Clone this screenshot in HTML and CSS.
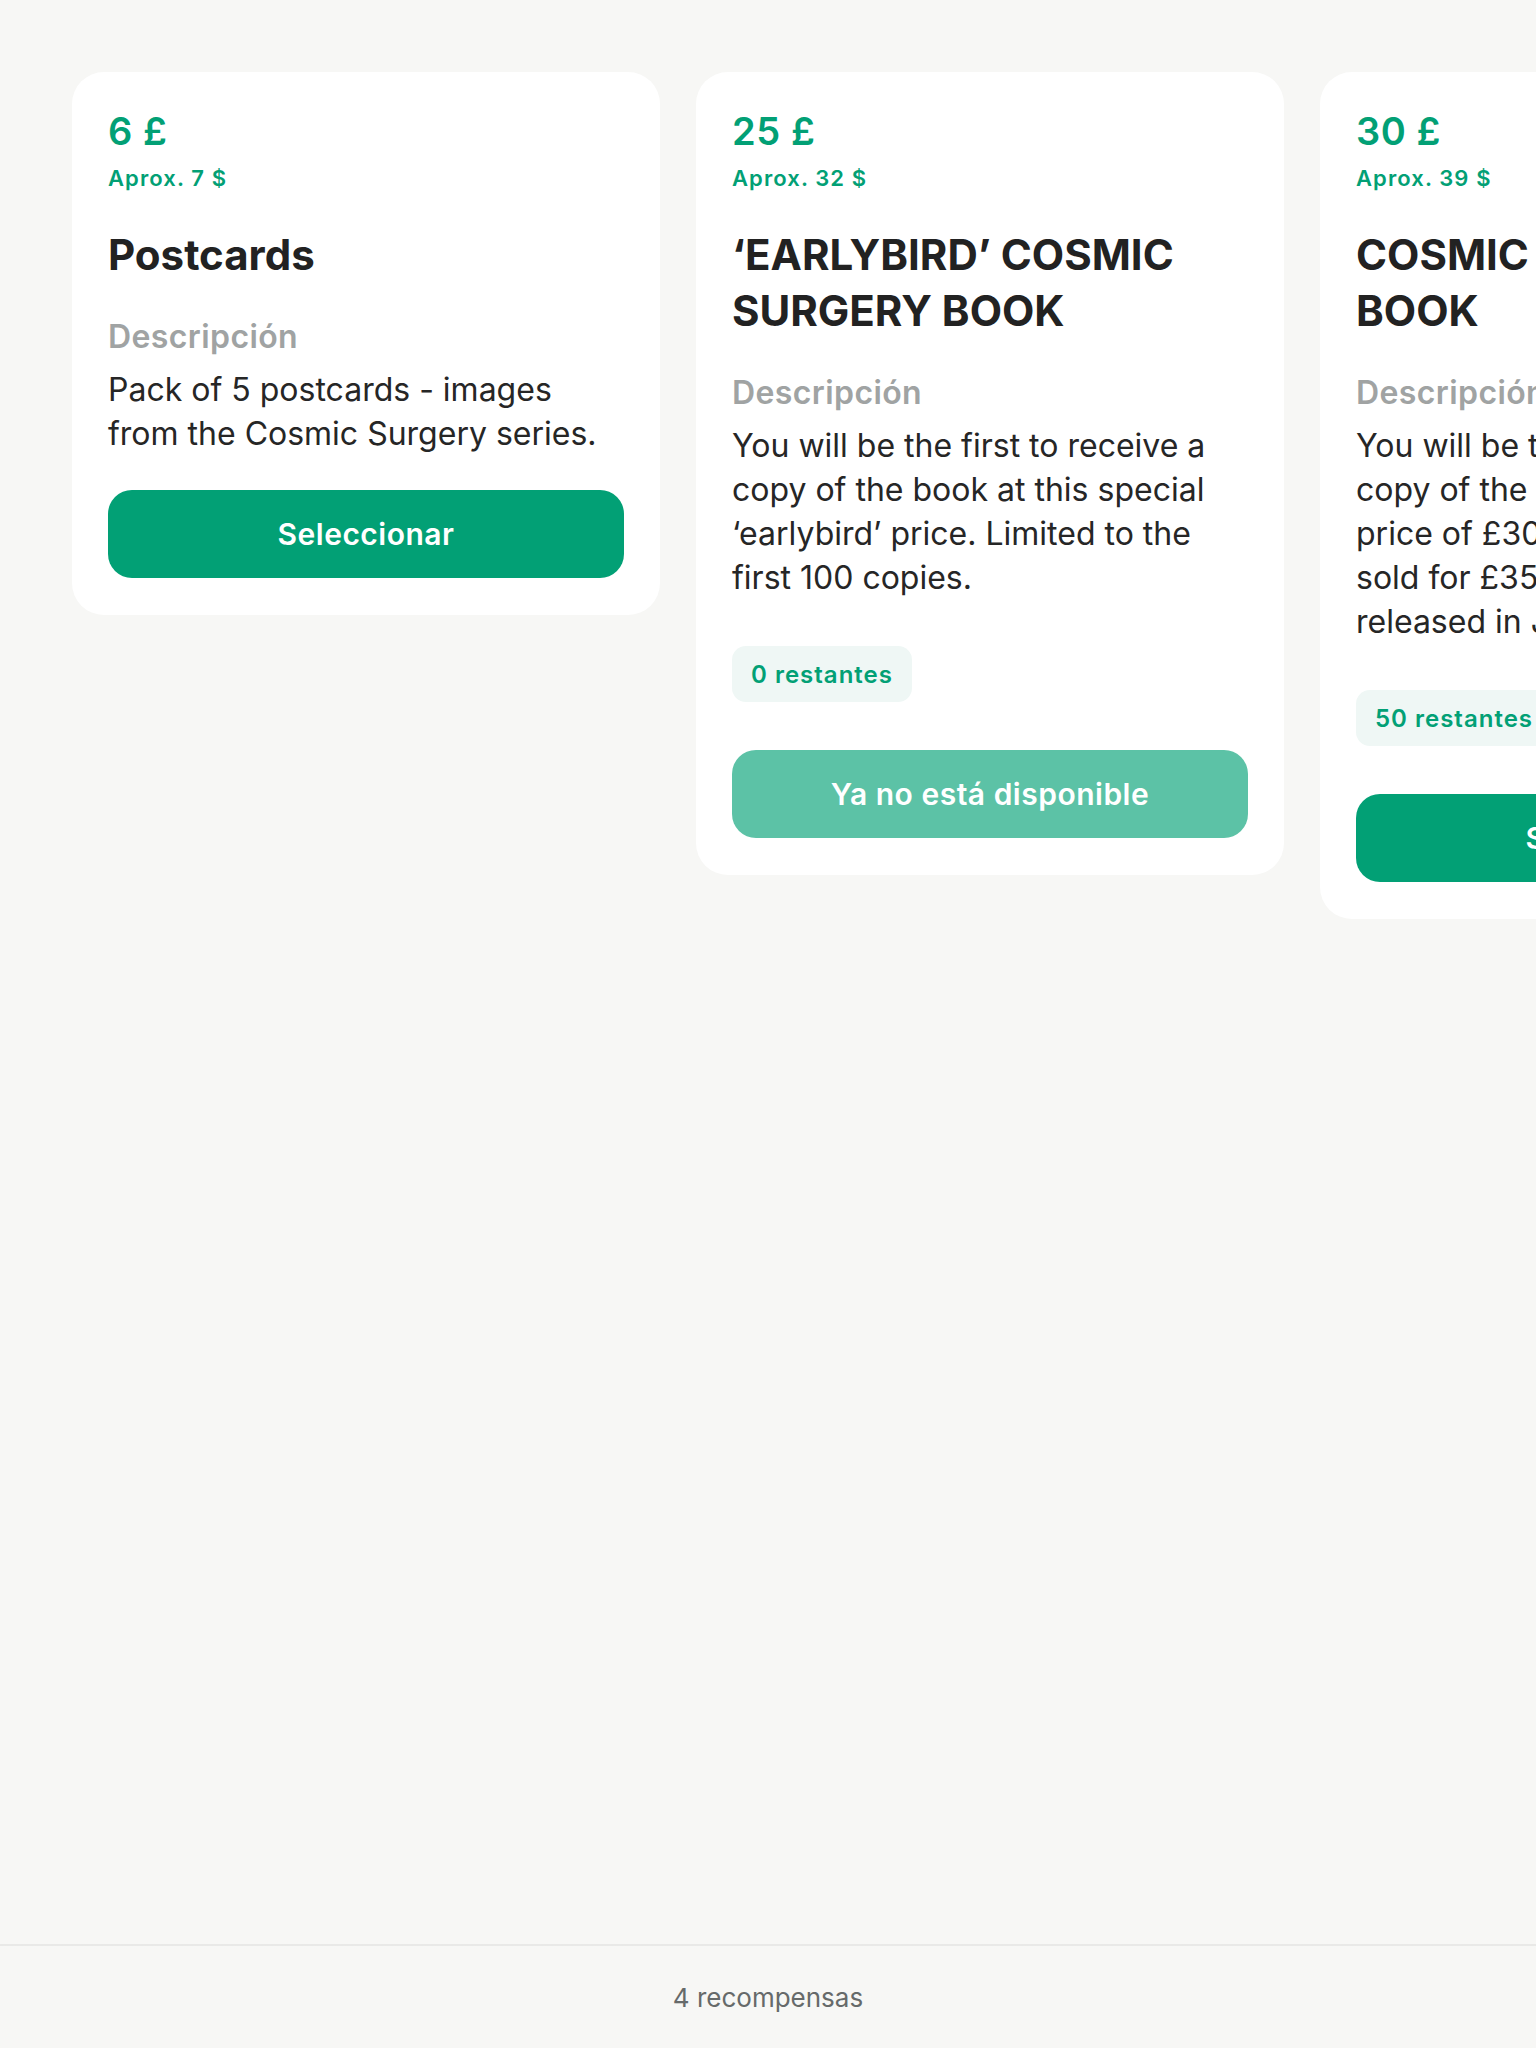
FILE: index.html
```html
<!DOCTYPE html>
<html lang="es">
<head>
<meta charset="utf-8">
<title>Recompensas</title>
<link rel="stylesheet" href="styles.css">
</head>
<body>
<div class="page">
  <div class="rewards">
    <div class="card">
      <div class="price">6 £</div>
      <div class="approx">Aprox. 7 $</div>
      <h2 class="title">Postcards</h2>
      <div class="desc-label">Descripción</div>
      <p class="desc">Pack of 5 postcards - images from the Cosmic Surgery series.</p>
      <button class="btn">Seleccionar</button>
    </div>
    <div class="card">
      <div class="price">25 £</div>
      <div class="approx">Aprox. 32 $</div>
      <h2 class="title">‘EARLYBIRD’ COSMIC SURGERY BOOK</h2>
      <div class="desc-label">Descripción</div>
      <p class="desc">You will be the first to receive a copy of the book at this special ‘earlybird’ price. Limited to the first 100 copies.</p>
      <div class="badge">0 restantes</div>
      <button class="btn btn-disabled">Ya no está disponible</button>
    </div>
    <div class="card">
      <div class="price">30 £</div>
      <div class="approx">Aprox. 39 $</div>
      <h2 class="title">COSMIC SURGERY<br>BOOK</h2>
      <div class="desc-label">Descripción</div>
      <p class="desc">You will be the first to receive a<br>copy of the book at the special<br>price of £30. The book will be<br>sold for £35 when it is<br>released in June.</p>
      <div class="badge">50 restantes</div>
      <button class="btn">Seleccionar</button>
    </div>
    <div class="card">
      <div class="price">100 £</div>
      <div class="approx">Aprox. 127 $</div>
      <h2 class="title">SIGNED PRINT</h2>
      <div class="desc-label">Descripción</div>
      <p class="desc">A signed limited edition print from the Cosmic Surgery series.</p>
      <button class="btn">Seleccionar</button>
    </div>
  </div>
  <div class="footer">4 recompensas</div>
</div>
</body>
</html>
```

FILE: styles.css
```css
html, body {
  margin: 0;
  padding: 0;
  background: #f7f7f5;
  font-family: Inter, "Noto Sans", sans-serif;
}
.page {
  height: 100vh;
  display: flex;
  flex-direction: column;
  overflow: hidden;
}
.rewards {
  flex: 1;
  display: flex;
  align-items: flex-start;
  gap: 36px;
  padding: 72px 0 0 72px;
  overflow: hidden;
}
.card {
  flex: 0 0 588px;
  box-sizing: border-box;
  background: #ffffff;
  border-radius: 32px;
  padding: 38px 36px 37px;
  display: flex;
  flex-direction: column;
  align-items: flex-start;
}
.price {
  font-size: 38px;
  line-height: 43px;
  font-weight: 600;
  letter-spacing: 0.6px;
  color: #02a075;
}
.approx {
  margin-top: 12px;
  font-size: 22px;
  line-height: 26px;
  font-weight: 600;
  letter-spacing: 1.1px;
  color: #02a075;
}
.title {
  margin: 36px 0 0;
  font-size: 42px;
  line-height: 56px;
  font-weight: 700;
  color: #222222;
}
.desc-label {
  margin-top: 32px;
  font-size: 32px;
  line-height: 44px;
  font-weight: 600;
  letter-spacing: 0.4px;
  color: #a0a3a3;
}
.desc {
  margin: 9px 0 0;
  font-size: 32px;
  line-height: 44px;
  font-weight: 400;
  color: #262626;
}
.badge {
  margin-top: 46px;
  height: 56px;
  box-sizing: border-box;
  padding: 0 19px;
  display: flex;
  align-items: center;
  border-radius: 14px;
  background: #eff7f5;
  color: #02a075;
  font-size: 24px;
  font-weight: 600;
  letter-spacing: 1px;
}
.btn {
  align-self: stretch;
  margin-top: 34px;
  height: 88px;
  border: none;
  border-radius: 24px;
  background: #02a075;
  color: #ffffff;
  font-family: Inter, "Noto Sans", sans-serif;
  font-size: 30px;
  font-weight: 600;
  letter-spacing: 0.5px;
}
.badge + .btn {
  margin-top: 48px;
}
.btn-disabled {
  background: #5cc2a6;
}
.footer {
  flex: 0 0 102px;
  border-top: 2px solid #e9e9e7;
  display: flex;
  align-items: center;
  justify-content: center;
  font-size: 26px;
  color: #666a6a;
}
```
